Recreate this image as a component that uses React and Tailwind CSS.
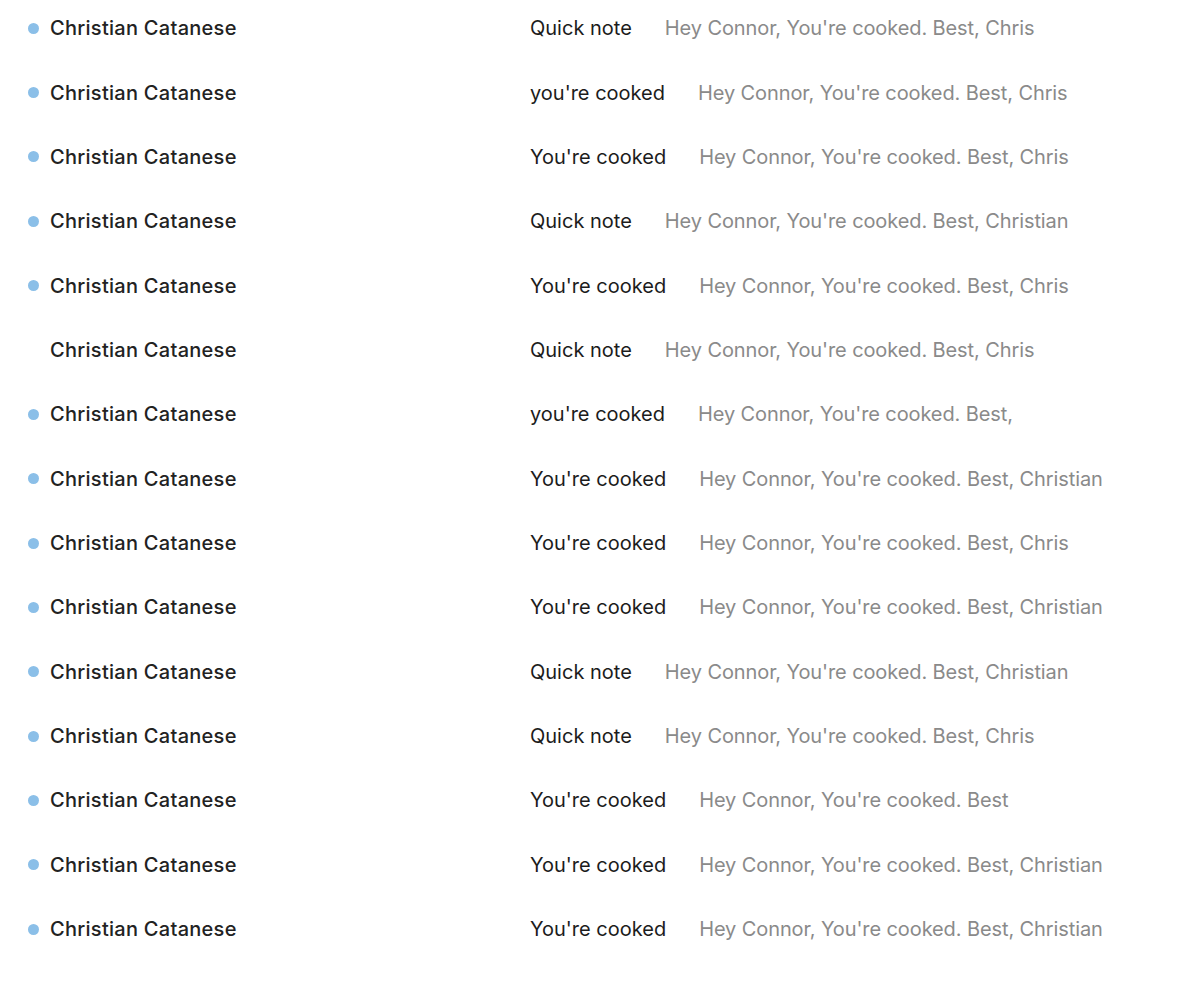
import React from "react";

const rows = [
  [true, "Quick note", "Hey Connor, You're cooked. Best, Chris"],
  [true, "you're cooked", "Hey Connor, You're cooked. Best, Chris"],
  [true, "You're cooked", "Hey Connor, You're cooked. Best, Chris"],
  [true, "Quick note", "Hey Connor, You're cooked. Best, Christian"],
  [true, "You're cooked", "Hey Connor, You're cooked. Best, Chris"],
  [false, "Quick note", "Hey Connor, You're cooked. Best, Chris"],
  [true, "you're cooked", "Hey Connor, You're cooked. Best,"],
  [true, "You're cooked", "Hey Connor, You're cooked. Best, Christian"],
  [true, "You're cooked", "Hey Connor, You're cooked. Best, Chris"],
  [true, "You're cooked", "Hey Connor, You're cooked. Best, Christian"],
  [true, "Quick note", "Hey Connor, You're cooked. Best, Christian"],
  [true, "Quick note", "Hey Connor, You're cooked. Best, Chris"],
  [true, "You're cooked", "Hey Connor, You're cooked. Best"],
  [true, "You're cooked", "Hey Connor, You're cooked. Best, Christian"],
  [true, "You're cooked", "Hey Connor, You're cooked. Best, Christian"],
];

export default function App() {
  return (
    <div
      className="w-[1200px] h-[988px] bg-white overflow-hidden"
      style={{ fontFamily: "Inter, 'Noto Sans', sans-serif" }}
    >
      <div className="-mt-[4px]">
        {rows.map(([unread, subject, preview], i) => (
          <div key={i} className="flex items-center h-[64.36px] text-[20px]">
            <div className="w-[50px] flex justify-end pr-[11px]">
              {unread ? (
                <span className="block w-[11px] h-[11px] rounded-full bg-[#8bbfe8]" />
              ) : null}
            </div>
            <div className="w-[480px] font-medium text-[#222222] tracking-[0.28px]">
              Christian Catanese
            </div>
            <div className="flex gap-[33px]">
              <span className="text-[#1c1c1c]">{subject}</span>
              <span className="text-[#8a8a8a] tracking-[-0.1px]">{preview}</span>
            </div>
          </div>
        ))}
      </div>
    </div>
  );
}
